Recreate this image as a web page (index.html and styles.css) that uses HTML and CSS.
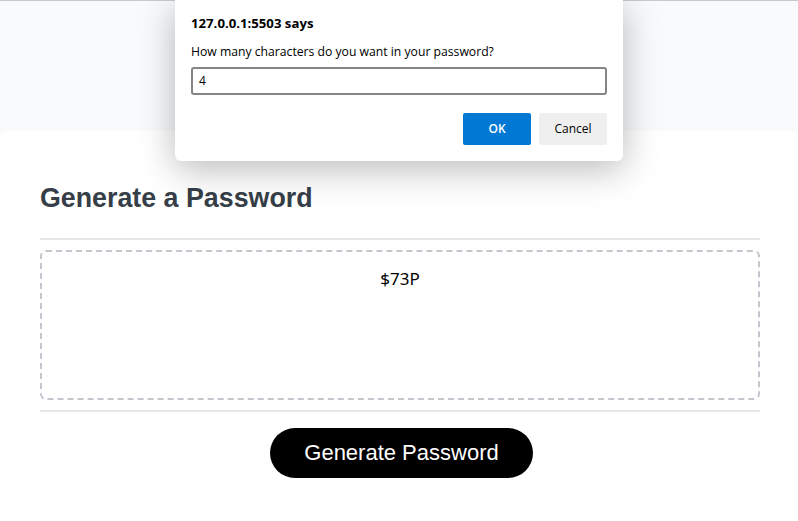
FILE: index.html
```html
<!DOCTYPE html>
<html>
<head>
<meta charset="utf-8">
<link rel="stylesheet" href="styles.css">
</head>
<body>
<div class="page">
  <div class="topband"></div>
  <div class="card">
    <h1 class="title">Generate a Password</h1>
    <div class="sep"></div>
    <div class="output">$73P</div>
    <div class="sep"></div>
    <div class="actions">
      <button class="gen">Generate Password</button>
    </div>
  </div>
</div>
<div class="dialog">
  <div class="d-title">127.0.0.1:5503 says</div>
  <div class="d-msg">How many characters do you want in your password?</div>
  <div class="d-input">4</div>
  <div class="d-buttons">
    <div class="btn ok">OK</div>
    <div class="btn cancel">Cancel</div>
  </div>
</div>
</body>
</html>
```
FILE: styles.css
```css
html, body { margin: 0; padding: 0; }
body {
  width: 798px;
  height: 521px;
  overflow: hidden;
  background: #f9fafb;
  font-family: "Liberation Sans", Arial, sans-serif;
  border-top: 1px solid #c9c9c9;
  box-sizing: border-box;
}
.page { display: flex; flex-direction: column; }
.topband { height: 130px; }
.card {
  background: #fff;
  border-radius: 8px 0 0 0;
  margin-right: -10px;
  padding: 0 48px 0 40px;
  height: 400px;
}
.title {
  margin: 0;
  padding-top: 52px;
  font-size: 26.8px;
  font-weight: bold;
  color: #363e48;
  line-height: 30px;
}
.sep {
  height: 2px;
  background: #e6e6e6;
  width: 720px;
}
.card > .sep:first-of-type { margin-top: 25px; }
.output {
  width: 720px;
  box-sizing: border-box;
  height: 150px;
  margin: 10px 0;
  border: 2px dashed #c3c6cd;
  border-radius: 6px;
  text-align: center;
  font-family: "Noto Sans", "DejaVu Sans", sans-serif;
  font-size: 17px;
  color: #000;
  padding-top: 15px;
}
.actions { width: 720px; display: flex; justify-content: center; padding-top: 16px; }
.gen {
  background: #000;
  color: #fff;
  border: none;
  border-radius: 25px;
  width: 263px;
  height: 50px;
  font-family: "Liberation Sans", Arial, sans-serif;
  font-size: 22px;
  margin-left: 3px;
}
.dialog {
  position: absolute;
  left: 175px;
  top: 0;
  width: 448px;
  height: 161px;
  box-sizing: border-box;
  background: #fff;
  border-radius: 0 0 6px 6px;
  box-shadow: 0 8px 36px rgba(0,0,0,0.28);
  padding: 14px 16px 0 16px;
  font-family: "Open Sans", "Noto Sans", sans-serif;
  color: #000;
}
.d-title { font-size: 13.2px; font-weight: bold; line-height: 18px; }
.d-msg { font-size: 12.2px; line-height: 18px; margin-top: 11px; }
.d-input {
  margin-top: 6px;
  height: 28px;
  box-sizing: border-box;
  border: 2px solid #858585;
  border-radius: 3px;
  font-size: 12px;
  line-height: 24px;
  padding-left: 6px;
}
.d-buttons { display: flex; justify-content: flex-end; gap: 8px; margin-top: 18px; }
.btn {
  width: 68px;
  height: 32px;
  border-radius: 2px;
  font-size: 12px;
  line-height: 32px;
  text-align: center;
}
.ok { background: #0078d4; color: #fff; font-weight: 600; }
.cancel { background: #efefef; color: #000; }
```
